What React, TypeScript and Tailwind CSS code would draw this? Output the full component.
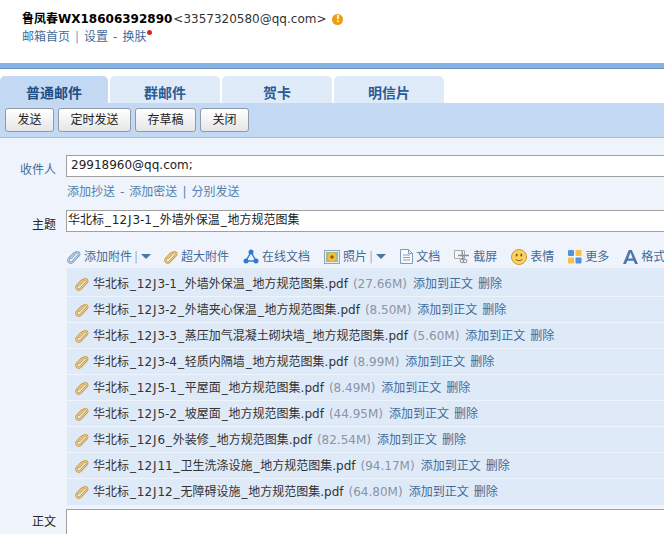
import { ReactNode } from "react";

const FONT = "font-['DejaVu_Sans','Noto_Sans_CJK_SC',sans-serif]";

const TABS = ["普通邮件", "群邮件", "贺卡", "明信片"];
const ACTIONS = ["发送", "定时发送", "存草稿", "关闭"];

const ATTACHMENTS = [
  { name: "华北标_12J3-1_外墙外保温_地方规范图集.pdf", size: "27.66M" },
  { name: "华北标_12J3-2_外墙夹心保温_地方规范图集.pdf", size: "8.50M" },
  { name: "华北标_12J3-3_蒸压加气混凝土砌块墙_地方规范图集.pdf", size: "5.60M" },
  { name: "华北标_12J3-4_轻质内隔墙_地方规范图集.pdf", size: "8.99M" },
  { name: "华北标_12J5-1_平屋面_地方规范图集.pdf", size: "8.49M" },
  { name: "华北标_12J5-2_坡屋面_地方规范图集.pdf", size: "44.95M" },
  { name: "华北标_12J6_外装修_地方规范图集.pdf", size: "82.54M" },
  { name: "华北标_12J11_卫生洗涤设施_地方规范图集.pdf", size: "94.17M" },
  { name: "华北标_12J12_无障碍设施_地方规范图集.pdf", size: "64.80M" },
];

// Underscores and J run narrow in the fallback latin face, so give them some room
function FileName({ text }: { text: string }) {
  return (
    <>
      {text.split(/([_J])/).map((part, i) =>
        part === "_" || part === "J" ? (
          <span key={i} className="mx-[0.9px]">{part}</span>
        ) : (
          <span key={i}>{part}</span>
        ),
      )}
    </>
  );
}

function Clip({ tone = "gold" }: { tone?: "gold" | "blue" }) {
  const stroke = tone === "gold" ? "#c99a45" : "#7f9cbd";
  const inner = tone === "gold" ? "#f3d48f" : "#c9d8ea";
  const d = "M4.2 7.6 8.6 2.9c1-1 2.3-1 3-.2.8.8.7 2-.2 3L6 11.4c-1.3 1.3-3 1.4-3.9.5-.9-.9-.8-2.5.4-3.8L6.800 3.600";
  return (
    <svg width="14" height="14" viewBox="0 0 14 14" fill="none" className="shrink-0">
      <path d={d} stroke={stroke} strokeWidth="2.400" strokeLinecap="round" />
      <path d={d} stroke={inner} strokeWidth="1" strokeLinecap="round" />
    </svg>
  );
}

function Caret() {
  return (
    <svg width="10" height="5" viewBox="0 0 10 5" className="shrink-0">
      <path d="M0 0h10L5 5z" fill="#4a75a8" />
    </svg>
  );
}

function ShareIcon() {
  return (
    <svg width="16" height="15" viewBox="0 0 16 15" fill="none" className="shrink-0">
      <path d="M8 3 3 12h10z" stroke="#3f7fd0" strokeWidth="1.500" />
      <circle cx="8" cy="3" r="2.500" fill="#2f78d6" />
      <circle cx="3" cy="12" r="2.500" fill="#2f78d6" />
      <circle cx="13" cy="12" r="2.500" fill="#2f78d6" />
    </svg>
  );
}

function PhotoIcon() {
  return (
    <svg width="16" height="14" viewBox="0 0 16 14" className="shrink-0">
      <rect x="0.500" y="0.500" width="15" height="13" fill="#e8eef6" stroke="#8ea6c2" />
      <rect x="2" y="2" width="12" height="10" fill="#a9b98a" />
      <circle cx="8" cy="7" r="4.300" fill="#f5c22e" />
      <circle cx="8" cy="7" r="1.800" fill="#8a5a1e" />
    </svg>
  );
}

function DocIcon() {
  return (
    <svg width="13" height="15" viewBox="0 0 13 15" fill="none" className="shrink-0">
      <path d="M.5.5h8l4 4v10H.5z" fill="#f6f9fd" stroke="#7d9cc0" />
      <path d="M3 6h7M3 8.500h7M3 11h7" stroke="#8aa6c8" />
      <path d="M8.500.5v4h4" stroke="#7d9cc0" />
    </svg>
  );
}

function ScreenshotIcon() {
  return (
    <svg width="16" height="15" viewBox="0 0 16 15" fill="none" className="shrink-0">
      <path d="M.5 1.500h10v8H.5z" fill="#f4f6f8" stroke="#a8a8a8" />
      <path d="M8 2l1 8M4 6.500h11" stroke="#8c8c8c" strokeWidth="1.400" />
      <circle cx="8" cy="12" r="1.800" stroke="#8c8c8c" />
      <circle cx="11" cy="12" r="1.800" stroke="#8c8c8c" />
    </svg>
  );
}

function SmileIcon() {
  return (
    <svg width="16" height="16" viewBox="0 0 16 16" className="shrink-0">
      <circle cx="8" cy="8" r="7.500" fill="#fbd25f" stroke="#c99a3a" />
      <ellipse cx="5.700" cy="6" rx="1" ry="1.500" fill="#7a5a20" />
      <ellipse cx="10.300" cy="6" rx="1" ry="1.500" fill="#7a5a20" />
      <path d="M4.500 10c1.500 2.200 5.500 2.200 7 0" stroke="#8a6420" fill="none" />
    </svg>
  );
}

function MoreIcon() {
  return (
    <svg width="14" height="14" viewBox="0 0 14 14" className="shrink-0">
      <rect width="6" height="6" rx="1" fill="#4f94e0" />
      <rect x="7.500" width="6" height="6" rx="1" fill="#f5c242" />
      <rect y="7.500" width="6" height="6" rx="1" fill="#f5c242" />
      <rect x="7.500" y="7.500" width="6" height="6" rx="1" fill="#4f94e0" />
    </svg>
  );
}

function FormatIcon() {
  return (
    <svg width="15" height="14" viewBox="0 0 15 14" className="shrink-0">
      <path d="M5.800 0h3L15 14h-3l-1.300-3.300H4.300L3 14H0zM5.200 8.400h4.600L7.500 2.600z" fill="#4c76ad" />
    </svg>
  );
}

function ToolItem({ icon, label, className = "" }: { icon: ReactNode; label: string; className?: string }) {
  return (
    <span className={`flex items-center gap-[3px] whitespace-nowrap ${className}`}>
      {icon}
      <span>{label}</span>
    </span>
  );
}

export default function App() {
  return (
    <div className={`${FONT} w-[664px] h-[534px] overflow-hidden bg-white text-[12px] leading-[16px]`}>
      {/* Account header */}
      <div className="h-[63px] pl-[22px] pt-[11px]">
        <div className="flex items-center whitespace-nowrap h-[16px]">
          <span className="font-bold text-black">鲁凤春WX18606392890</span>
          <span className="ml-[1px] text-[#333]">&lt;3357320580@qq.com&gt;</span>
          <span className="ml-[6px] w-[11px] h-[11px] rounded-full bg-[#f39b0f] text-white text-[9px] leading-[11px] font-bold text-center">!</span>
        </div>
        <div className="mt-[2px] flex text-[#436b97] whitespace-nowrap">
          <span>邮箱首页</span>
          <span className="mx-[5px] text-[#7f9fc2]">|</span>
          <span>设置</span>
          <span className="mx-[5px]">-</span>
          <span>换肤</span>
          <span className="mt-[1px] ml-[1px] w-[5px] h-[5px] rounded-full bg-[#d8261c]" />
        </div>
      </div>
      <div className="h-[6px] bg-[#85b2e6] border-b border-[#6d94c4]" />

      {/* Compose type tabs */}
      <div className="flex gap-[2px] h-[34px] items-end">
        {TABS.map((tab, i) => (
          <div
            key={tab}
            className={`h-[27px] rounded-t-[5px] pt-[9px] text-center text-[14px] font-bold ${
              i === 0 ? "w-[108px] bg-[#c3d9f3] text-[#1f4d86]" : "w-[110px] bg-[#e0ebfa] text-[#2d5c94]"
            }`}
          >
            {tab}
          </div>
        ))}
      </div>

      {/* Send actions */}
      <div className="h-[35px] bg-[#c3d9f3] border-b border-[#a5bcd8] pl-[5px] pt-[5px] flex gap-[4px] items-start">
        {ACTIONS.map((action) => (
          <button
            key={action}
            className="h-[24px] px-[11.5px] rounded-[3px] border border-[#8f9aa6] bg-gradient-to-b from-white to-[#e6e6e6] text-[#222] text-[12px]"
          >
            {action}
          </button>
        ))}
      </div>

      {/* Compose form */}
      <div className="bg-[#eff4fc] h-[396px] pt-[17px]">
        <div className="flex">
          <div className="w-[56px] h-[22px] pt-[7px] text-right text-[#436b97]">收件人</div>
          <div className="ml-[10px] flex-1 min-w-0 h-[22px] border border-[#a0a0a0] border-r-0 bg-white pl-[4px] text-[#222] leading-[19px]">
            29918960@qq.com;
          </div>
        </div>
        <div className="ml-[67px] mt-[7px] flex text-[#5280ad] whitespace-nowrap">
          <span>添加抄送</span>
          <span className="mx-[5px]">-</span>
          <span>添加密送</span>
          <span className="mx-[5px]">|</span>
          <span>分别发送</span>
        </div>

        <div className="flex mt-[10px]">
          <div className="w-[56px] h-[22px] pt-[7px] text-right text-[#222]">主题</div>
          <div className="ml-[10px] flex-1 min-w-0 h-[22px] border border-[#a0a0a0] border-r-0 bg-white pl-[1px] text-[#222] leading-[19px] whitespace-nowrap">
            <FileName text="华北标_12J3-1_外墙外保温_地方规范图集" />
          </div>
        </div>

        {/* Attachment and insert toolbar */}
        <div className="ml-[67px] mt-[14px] h-[21px] flex items-center text-[#436b97] whitespace-nowrap">
          <ToolItem icon={<Clip tone="blue" />} label="添加附件" />
          <span className="ml-[2px] mr-[3px] text-[#9db2ca]">|</span>
          <Caret />
          <ToolItem icon={<Clip />} label="超大附件" className="ml-[13px]" />
          <ToolItem icon={<ShareIcon />} label="在线文档" className="ml-[14px]" />
          <ToolItem icon={<PhotoIcon />} label="照片" className="ml-[14px]" />
          <span className="ml-[2px] mr-[3px] text-[#9db2ca]">|</span>
          <Caret />
          <ToolItem icon={<DocIcon />} label="文档" className="ml-[14px]" />
          <ToolItem icon={<ScreenshotIcon />} label="截屏" className="ml-[14px]" />
          <ToolItem icon={<SmileIcon />} label="表情" className="ml-[14px]" />
          <ToolItem icon={<MoreIcon />} label="更多" className="ml-[14px]" />
          <ToolItem icon={<FormatIcon />} label="格式" className="ml-[14px]" />
        </div>

        {/* Uploaded files */}
        <div className="ml-[67px] mt-[1px] pt-[3px] bg-[#dfeaf9]">
          {ATTACHMENTS.map((file, i) => (
            <div
              key={file.name}
              className={`h-[26px] pl-[8px] flex items-center whitespace-nowrap ${
                i < ATTACHMENTS.length - 1 ? "border-b border-[#eef4fc]" : ""
              }`}
            >
              <Clip />
              <span className="ml-[4px] text-[#333]"><FileName text={file.name} /></span>
              <span className="ml-[5px] text-[#8a94a3]">({file.size})</span>
              <span className="ml-[6px] text-[#436b97]">添加到正文</span>
              <span className="ml-[5px] text-[#436b97]">删除</span>
            </div>
          ))}
        </div>

        <div className="flex mt-[4px]">
          <div className="w-[56px] pt-[5px] text-right text-[#222]">正文</div>
          <div className="ml-[10px] flex-1 h-[40px] border border-[#a0a0a0] border-r-0 bg-white" />
        </div>
      </div>
    </div>
  );
}
